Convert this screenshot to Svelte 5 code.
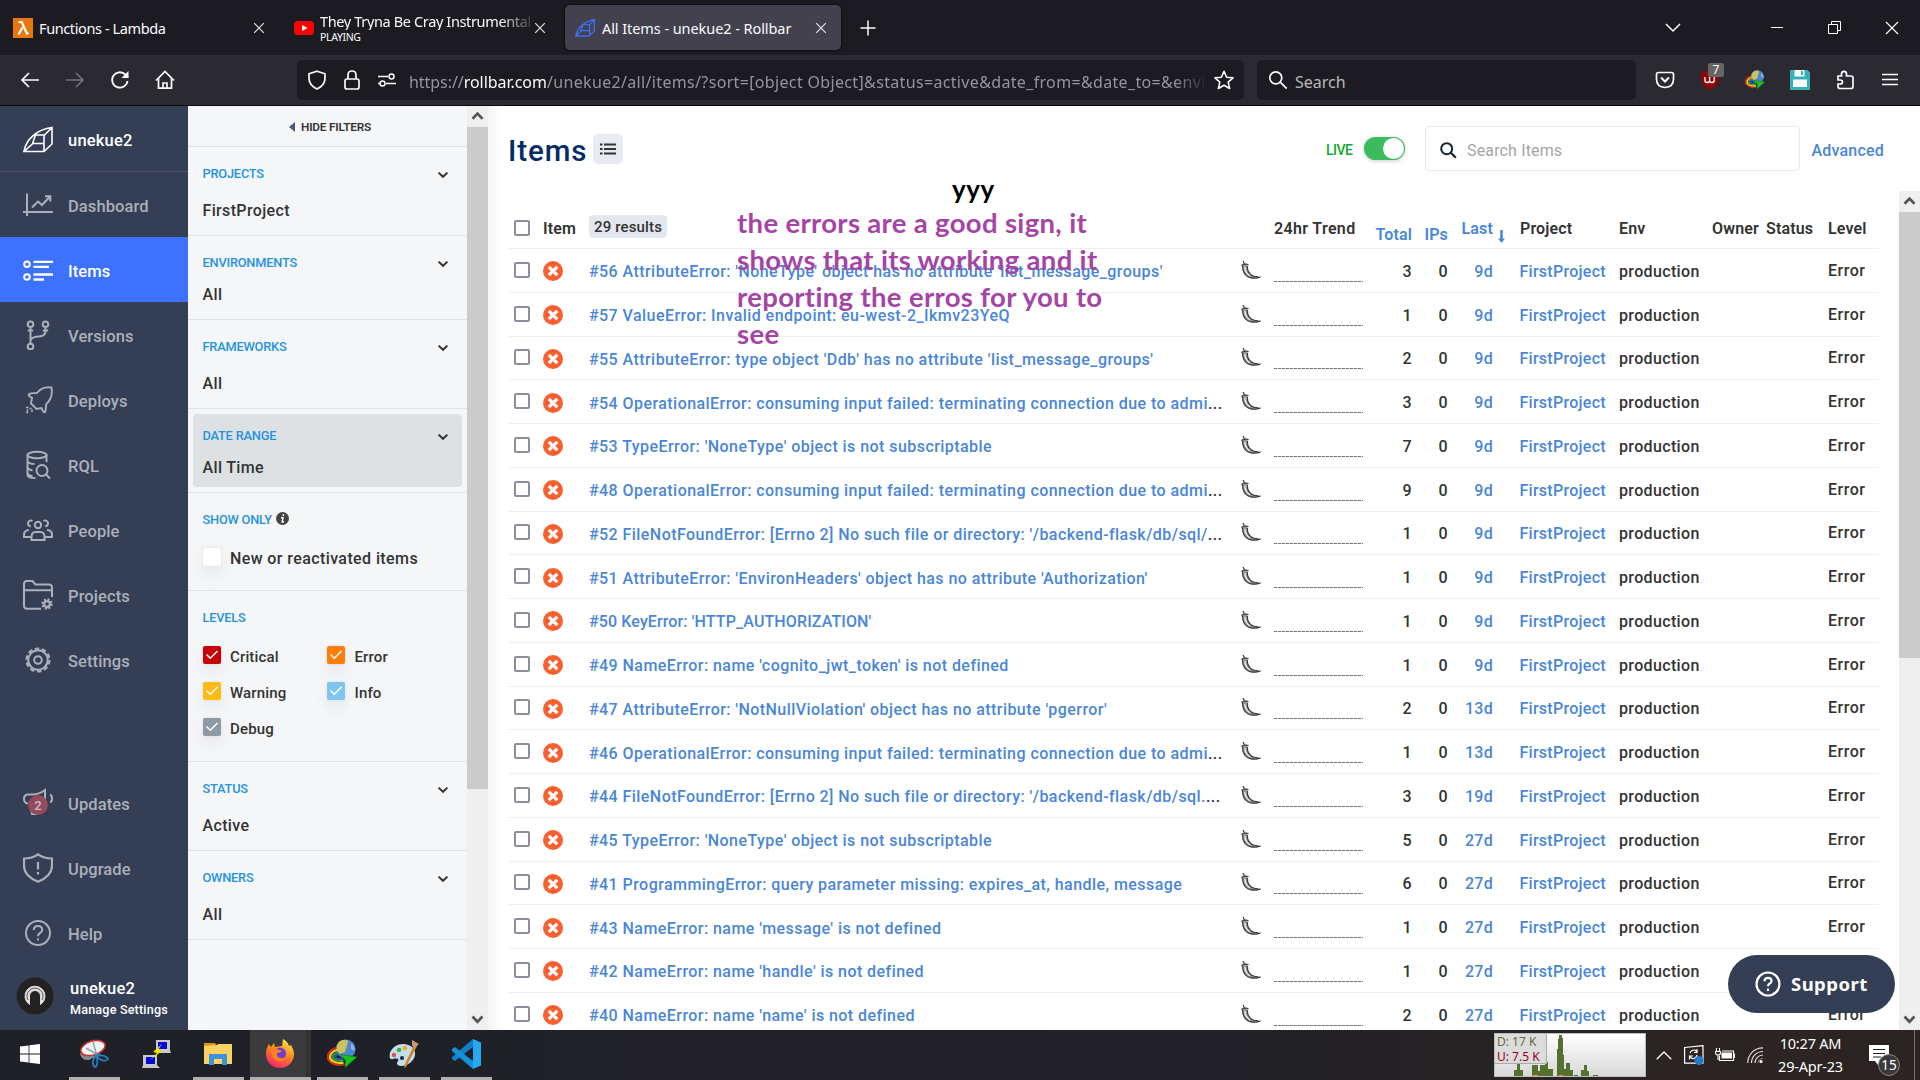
<script>
  const nav = [
    { label: 'Dashboard', icon: 'dashboard' },
    { label: 'Items', icon: 'items', active: true },
    { label: 'Versions', icon: 'versions' },
    { label: 'Deploys', icon: 'deploys' },
    { label: 'RQL', icon: 'rql' },
    { label: 'People', icon: 'people' },
    { label: 'Projects', icon: 'projects' },
    { label: 'Settings', icon: 'settings' }
  ];
  const navBottom = [
    { label: 'Updates', icon: 'updates' },
    { label: 'Upgrade', icon: 'upgrade' },
    { label: 'Help', icon: 'help' }
  ];
  const levels = [
    { label: 'Critical', cls: 'critical' },
    { label: 'Error', cls: 'error' },
    { label: 'Warning', cls: 'warning' },
    { label: 'Info', cls: 'info' },
    { label: 'Debug', cls: 'debug' }
  ];
  const rows = [
    { t: "#56 AttributeError: 'NoneType' object has no attribute 'list_message_groups'", n: 3, d: '9d' },
    { t: '#57 ValueError: Invalid endpoint: eu-west-2_Ikmv23YeQ', n: 1, d: '9d' },
    { t: "#55 AttributeError: type object 'Ddb' has no attribute 'list_message_groups'", n: 2, d: '9d' },
    { t: '#54 OperationalError: consuming input failed: terminating connection due to admi', n: 3, d: '9d', cut: true },
    { t: "#53 TypeError: 'NoneType' object is not subscriptable", n: 7, d: '9d' },
    { t: '#48 OperationalError: consuming input failed: terminating connection due to admi', n: 9, d: '9d', cut: true },
    { t: "#52 FileNotFoundError: [Errno 2] No such file or directory: '/backend-flask/db/sql/", n: 1, d: '9d', cut: true },
    { t: "#51 AttributeError: 'EnvironHeaders' object has no attribute 'Authorization'", n: 1, d: '9d' },
    { t: "#50 KeyError: 'HTTP_AUTHORIZATION'", n: 1, d: '9d', caps: true },
    { t: "#49 NameError: name 'cognito_jwt_token' is not defined", n: 1, d: '9d' },
    { t: "#47 AttributeError: 'NotNullViolation' object has no attribute 'pgerror'", n: 2, d: '13d' },
    { t: '#46 OperationalError: consuming input failed: terminating connection due to admi', n: 1, d: '13d', cut: true },
    { t: "#44 FileNotFoundError: [Errno 2] No such file or directory: '/backend-flask/db/sql.", n: 3, d: '19d', cut: true },
    { t: "#45 TypeError: 'NoneType' object is not subscriptable", n: 5, d: '27d' },
    { t: '#41 ProgrammingError: query parameter missing: expires_at, handle, message', n: 6, d: '27d' },
    { t: "#43 NameError: name 'message' is not defined", n: 1, d: '27d' },
    { t: "#42 NameError: name 'handle' is not defined", n: 1, d: '27d' },
    { t: "#40 NameError: name 'name' is not defined", n: 2, d: '27d' }
  ];
</script>

{#snippet chevron()}
  <svg class="chev" width="12" height="8" viewBox="0 0 12 8"><path d="M1.6 1.6 6 5.8l4.4-4.2" fill="none" stroke="#333" stroke-width="2" /></svg>
{/snippet}

{#snippet filter(title, value, tall)}
  <section class="filter" class:tall>
    <div class="ftitle"><span>{title}</span>{@render chevron()}</div>
    <div class="fvalue">{value}</div>
  </section>
{/snippet}

{#snippet scrollArrow(down)}
  <svg class="sarrow" width="21" height="21" viewBox="0 0 21 21"><path d={down ? 'M5.5 7.5l5 5.2 5-5.2' : 'M5.5 12.8l5-5.2 5 5.2'} fill="none" stroke="#555" stroke-width="2.7" /></svg>
{/snippet}

{#snippet closeX()}
  <svg width="12" height="12" viewBox="0 0 12 12"><path d="M1.2 1.2l9.6 9.6M10.8 1.2l-9.6 9.6" stroke="#e4e4e8" stroke-width="1.2" /></svg>
{/snippet}

{#snippet globeArrow(size)}
  <svg width={size} height={size} viewBox="0 0 30 30">
    <circle cx="19" cy="10" r="9.5" fill="#4b86cf" />
    <path d="M13 2q5-2.500 8 0l-1 5-2 6-5 2-4-4q0-6 4-9z" fill="#c9c264" />
    <path d="M24 4q4 3 4 8l-4-2z" fill="#8fb6e4" />
    <path d="M9.500 9C1 11-2 19 3.500 23q5 4.500 14 2" fill="none" stroke="#d92b1c" stroke-width="2" />
    <path d="M10 11C3 13 1 19 5.500 22q5 3 11 1.500" fill="none" stroke="#f3d21c" stroke-width="2.200" />
    <path d="M11 13.300C6 15 4 18 7.500 20.500q4 2 9 1" fill="none" stroke="#2fae35" stroke-width="1.800" />
    <path d="M12 15.200C8 16 7 18 10 19.500q3 1 6 .5" fill="none" stroke="#2c5be0" stroke-width="1.600" />
    <path d="M13.500 15.500l16.500 2.500-12 10.500.5-7z" fill="#17c51b" stroke="#0b7a10" stroke-width=".6" />
  </svg>
{/snippet}

{#snippet navIcon(name)}
  <svg class="nicon" width="30" height="30" viewBox="0 0 30 30" fill="none" stroke="currentColor" stroke-width="2">
    {#if name === 'dashboard'}
      <path d="M4 3.500V26M0 22h30M9 17.500l6-6 4 3.500 7.500-8M22 6.200h5.300v5.300" />
    {:else if name === 'items'}
      <circle cx="4" cy="9.300" r="2.800" /><circle cx="4" cy="22" r="2.800" />
      <path d="M10.500 6.800H30M10.500 11.800H26M10.500 19.500H30M10.500 24.500H21" stroke-width="2.300" />
    {:else if name === 'versions'}
      <circle cx="7.500" cy="4.300" r="2.800" /><circle cx="22.500" cy="4.300" r="2.800" /><circle cx="7.500" cy="26.500" r="2.800" />
      <path d="M7.500 8v15M4.800 10.500h5.400M19.800 10.500h5.400M22.500 8v3q0 5-6.500 5.500-8 .5-8.500 4" />
    {:else if name === 'deploys'}
      <path d="M28.500 2.500c-7-1-11 1-14.500 5.500-3 .3-6 0-7.500.8-1.500 1-1 2 1 3l1.500 1.200-1 5.500 5.500 5.500 5-1 1.500 3c1 1.500 2 1.800 2.500 0l.8-7c4.500-4 6.500-9 5.200-16.500z" stroke-width="1.900" />
      <path d="M3 22.500h2.500M6.500 23.500h2M9 24.500v2.500M3 27.500h2M4 24.500l1 2" stroke-width="1.600" />
    {:else if name === 'rql'}
      <ellipse cx="14" cy="5" rx="9.500" ry="3.200" />
      <path d="M4.500 5v20q0 3 8 3M23.500 5v7M4.500 11.500q2 2.500 7 2.500M4.500 18q2 2 5 2.500M4.500 24q2 2 5 2" />
      <circle cx="19" cy="20.500" r="5.500" /><path d="M23 24.500l4 4" />
    {:else if name === 'people'}
      <circle cx="15" cy="10" r="3.200" /><path d="M8.500 25v-3q0-5 4-5h5q4 0 4 5v3zM7.500 22H1v-2.500q0-4 5-4.500M22.500 22H29v-2.500q0-4-5-4.500M9.500 6A2.900 2.900 0 1 0 7.800 11.300M20.500 6A2.900 2.900 0 1 1 22.200 11.300" />
    {:else if name === 'projects'}
      <path d="M18 28.700H4q-3 0-3-3V4q0-3 3-3h5.500l3 3.500H26q3 0 3 3V17M1 10.300h28" />
      <circle cx="24" cy="24" r="3" stroke-width="2.400" /><circle cx="24" cy="24" r="4.800" stroke-width="1.800" stroke-dasharray="2 1.770" />
    {:else if name === 'settings'}
      <circle cx="15" cy="15" r="9.700" /><circle cx="15" cy="15" r="3.800" /><circle cx="15" cy="15" r="11.500" stroke-width="2.200" stroke-dasharray="4.500 2.725" />
    {:else if name === 'updates'}
      <path d="M9 6.500H5q-4 0-4 4.500 0 4 4 4.500M9 6.500q7 0 13-4.500v19.500l-3-1.500M27 7q2 0 2 3.500T27 14M8 20l1 6h6" />
    {:else if name === 'upgrade'}
      <path d="M15 1.300q6 4.200 14 4.200v7.500q0 10-14 15.700Q1 23 1 13V5.500q8 0 14-4.200zM15 9v7.500M15 19v2.500" stroke-width="2.200" />
    {:else if name === 'help'}
      <circle cx="15" cy="15" r="12" /><path d="M10.800 12q0-4 4.200-4t4.200 3.700q0 2.300-2.200 3.300-2 1-2 3.200M15 20.500v2" />
    {/if}
  </svg>
{/snippet}

<div class="screen">
  <div class="tabs">
    <div class="tab t1">
      <svg class="fav" width="20" height="20" viewBox="0 0 20 20"><rect width="20" height="20" fill="#e8770d" /><path d="M5.500 4h3.300l5 11.500 1.700-.5M9.500 9.500l-4 7" fill="none" stroke="#fff" stroke-width="2.200" /></svg>
      <span class="ttext">Functions - Lambda</span>
      {@render closeX()}
    </div>
    <div class="tab t2">
      <svg class="fav" width="20" height="14" viewBox="0 0 20 14"><rect width="20" height="14" rx="3.500" fill="#f00" /><path d="M8 4l5.500 3L8 10z" fill="#fff" /></svg>
      <div class="tstack"><span class="ttext fade">They Tryna Be Cray Instrumental</span><span class="playing">PLAYING</span></div>
      {@render closeX()}
    </div>
    <div class="tab t3">
      <svg class="fav" width="20" height="18" viewBox="0 0 30 27"><path d="M1 25.500C3 14 14 3 29 1v17l-8 7.500zM1 25.500l8-8h13v8M9 17.500l3-9h9.500L29 1M22 17.500V9" fill="none" stroke="#3d6ff0" stroke-width="2" /></svg>
      <span class="ttext">All Items - unekue2 - Rollbar</span>
      {@render closeX()}
    </div>
    <svg class="plus" width="16" height="16" viewBox="0 0 16 16"><path d="M8 .5v15M.5 8h15" stroke="#fbfbfe" stroke-width="1.500" /></svg>
    <div class="winctl">
      <svg width="16" height="10" viewBox="0 0 16 10"><path d="M1 1l7 7 7-7" fill="none" stroke="#fbfbfe" stroke-width="1.500" /></svg>
      <svg width="12" height="12" viewBox="0 0 12 12"><path d="M0 5.500h12" stroke="#fff" /></svg>
      <svg width="13" height="13" viewBox="0 0 13 13"><path d="M.5 3.500h9v9h-9zM3.500 3.500v-3h9v9h-3" fill="none" stroke="#fff" /></svg>
      <svg width="14" height="14" viewBox="0 0 14 14"><path d="M1 1l12 12M13 1L1 13" stroke="#fff" stroke-width="1.100" /></svg>
    </div>
  </div>

  <div class="toolbar">
    <div class="navbtns">
      <svg width="20" height="20" viewBox="0 0 20 20"><path d="M19 10H2M9 3l-7 7 7 7" fill="none" stroke="#fbfbfe" stroke-width="1.700" /></svg>
      <svg width="20" height="20" viewBox="0 0 20 20"><path d="M1 10h17M11 3l7 7-7 7" fill="none" stroke="#76757e" stroke-width="1.500" /></svg>
      <svg width="20" height="20" viewBox="0 0 20 20"><path d="M17.500 11a7.700 7.700 0 1 1-2.200-6.500L18 7" fill="none" stroke="#fbfbfe" stroke-width="1.800" /><path d="M18.500 1v7h-7z" fill="#fbfbfe" /></svg>
      <svg width="20" height="20" viewBox="0 0 20 20"><path d="M1 10.500L10 1.500l9 9M3.500 8.500v9.700h13V8.500M8 18v-5h4v5" fill="none" stroke="#fbfbfe" stroke-width="1.700" /></svg>
    </div>
    <div class="urlbar">
      <svg width="20" height="20" viewBox="0 0 20 20"><path d="M10 1.200l8 2.600v4.500q0 7-8 10.700Q2 15.300 2 8.300V3.800z" fill="none" stroke="#fbfbfe" stroke-width="1.700" /></svg>
      <svg width="16" height="20" viewBox="0 0 16 20"><rect x="1" y="9" width="14" height="10" rx="2" fill="none" stroke="#fbfbfe" stroke-width="1.700" /><path d="M4 9V5q0-4 4-4t4 4v4" fill="none" stroke="#fbfbfe" stroke-width="1.700" /></svg>
      <svg width="20" height="16" viewBox="0 0 20 16"><path d="M1 4.500h10M9 11.500h10M1 11.500h2" stroke="#fbfbfe" stroke-width="1.700" /><circle cx="14.500" cy="4.500" r="2.500" fill="none" stroke="#fbfbfe" stroke-width="1.500" /><circle cx="5.500" cy="11.500" r="2.500" fill="none" stroke="#fbfbfe" stroke-width="1.500" /></svg>
      <span class="url">https://<b>rollbar.com</b><span class="path">/unekue2/all/items/?sort=[object Object]&amp;status=active&amp;date_from=&amp;date_to=&amp;envi</span></span>
      <svg class="star" width="20" height="20" viewBox="0 0 20 20"><path d="M10 1.300l2.600 5.900 6.400.6-4.800 4.300 1.400 6.400L10 15.200l-5.600 3.300 1.400-6.400L1 7.800l6.400-.6z" fill="none" stroke="#fbfbfe" stroke-width="1.600" stroke-linejoin="round" /></svg>
    </div>
    <div class="searchbar">
      <svg width="20" height="20" viewBox="0 0 20 20"><circle cx="7.800" cy="7.800" r="6" fill="none" stroke="#fbfbfe" stroke-width="1.700" /><path d="M12.200 12.200l6.500 6.500" stroke="#fbfbfe" stroke-width="1.700" /></svg>
      <span>Search</span>
    </div>
    <div class="exts">
      <svg width="20" height="18" viewBox="0 0 20 18"><path d="M3.500 1.500h13q2 0 2 2V8q0 8-8.500 8.500Q1.500 16 1.500 8V3.500q0-2 2-2z" fill="none" stroke="#fbfbfe" stroke-width="1.700" /><path d="M6 6.500l4 4 4-4" fill="none" stroke="#fbfbfe" stroke-width="2" /></svg>
      <div class="ublock">
        <svg width="20" height="20" viewBox="0 0 20 20"><path d="M10 0l9 2.500V9q0 7-9 11Q1 16 1 9V2.500z" fill="#8c0709" /><path d="M5 7v3.500q0 2 2.300 2t2.300-2V7M9.600 10.500q0 2 2.300 2t2.300-2V7" fill="none" stroke="#fff" stroke-width="1.300" /></svg>
        <span class="badge7">7</span>
      </div>
      {@render globeArrow(20)}
      <svg width="20" height="20" viewBox="0 0 20 20"><path d="M0 0h17.500L20 2.500V20H0z" fill="#35b1b5" /><path d="M4.500 0h10v6.500h-10zM3 9.500h14V17H3z" fill="#fff" /><path d="M11 1h2v4h-2z" fill="#35b1b5" /></svg>
      <svg width="20" height="20" viewBox="0 0 20 20"><path d="M6.500 6V4q0-2.700 2.500-2.700T11.500 4v2H16q2 0 2 2v8.500q0 2-2 2H5q-2 0-2-2V14h2q2.500 0 2.500-2T5 10H3V6z" fill="none" stroke="#fbfbfe" stroke-width="1.700" /></svg>
      <svg width="16" height="14" viewBox="0 0 16 14"><path d="M0 1.500h16M0 6.500h16M0 11.500h16" stroke="#fbfbfe" stroke-width="1.500" /></svg>
    </div>
  </div>

  <div class="page">
    <nav class="side">
      <div class="brand">
        <svg width="30" height="27" viewBox="0 0 30 27"><path d="M1 25C3 14 14 3 29 1.500V18l-8 7.500H1l9-8h11v8M9.500 17.500l3-8.500h9L29 1.500M21 17.500V9" fill="none" stroke="#fff" stroke-width="1.600" /></svg>
        <span>unekue2</span>
      </div>
      {#each nav as n}
        <div class="nitem" class:active={n.active}>{@render navIcon(n.icon)}<span>{n.label}</span></div>
      {/each}
      <div class="spacer"></div>
      {#each navBottom as n}
        <div class="nitem">
          {@render navIcon(n.icon)}
          {#if n.icon === 'updates'}<i class="count">2</i>{/if}
          <span>{n.label}</span>
        </div>
      {/each}
      <div class="user">
        <svg width="38" height="38" viewBox="0 0 38 38"><circle cx="19" cy="19" r="18.500" fill="#222" /><path d="M13.500 27.500a10 10 0 1 1 11 0V19a5.500 5.500 0 0 0-11 0z" fill="#e4dedd" stroke="#e4dedd" /><path d="M15 27v-8a4 4 0 0 1 8 0v8" fill="none" stroke="#222" stroke-width="1" /><path d="M12 23a8 8 0 1 1 14 0" fill="none" stroke="#333" stroke-width=".8" /></svg>
        <div><strong>unekue2</strong><small>Manage Settings</small></div>
      </div>
    </nav>

    <aside class="filters">
      <div class="hide"><svg width="6" height="10" viewBox="0 0 6 10"><path d="M6 0v10L0 5z" fill="#4b5b80" /></svg><span>HIDE FILTERS</span></div>
      {@render filter('PROJECTS', 'FirstProject', true)}
      {@render filter('ENVIRONMENTS', 'All', false)}
      {@render filter('FRAMEWORKS', 'All', true)}
      <div class="hover">{@render filter('DATE RANGE', 'All Time', false)}</div>
      <section class="filter showonly">
        <div class="ftitle"><span>SHOW ONLY</span><svg class="infoi" width="13" height="13" viewBox="0 0 13 13"><circle cx="6.500" cy="6.500" r="6.500" fill="#444" /><path d="M7.300 2.200v1.900M5 5.800h2L6.200 10H8" fill="none" stroke="#fff" stroke-width="1.500" /></svg></div>
        <div class="check"><i class="box"></i><span class="newor">New or reactivated items</span></div>
      </section>
      <section class="filter levels">
        <div class="ftitle"><span>LEVELS</span></div>
        <div class="lgrid">
          {#each levels as l}
            <div class="check"><i class="box {l.cls}"><svg width="14" height="12" viewBox="0 0 14 12"><path d="M1.500 5.500l3.800 3.800L12.500 2" fill="none" stroke="#fff" stroke-width="1.500" /></svg></i><span>{l.label}</span></div>
          {/each}
        </div>
      </section>
      {@render filter('STATUS', 'Active', true)}
      {@render filter('OWNERS', 'All', true)}
    </aside>
    <div class="scroll left">{@render scrollArrow(false)}<div class="thumb"></div>{@render scrollArrow(true)}</div>

    <main>
      <header>
        <h1>Items</h1>
        <div class="listbtn"><svg width="16" height="12" viewBox="0 0 16 12"><path d="M0 1.500h2.500M4 1.500h12M0 6h2.500M4 6h12M0 10.500h2.500M4 10.500h12" stroke="#333" stroke-width="1.800" /></svg></div>
        <span class="live">LIVE</span>
        <div class="toggle"><i></i></div>
        <div class="sitems">
          <svg width="17" height="17" viewBox="0 0 17 17"><circle cx="6.700" cy="6.700" r="5.500" fill="none" stroke="#14272f" stroke-width="2" /><path d="M10.800 10.800l5 5" stroke="#14272f" stroke-width="2.300" /></svg>
          <span>Search Items</span>
        </div>
        <span class="adv">Advanced</span>
      </header>
      <div class="body">
        <div class="table">
          <div class="row head">
            <i class="cb"></i><span class="hitem">Item</span><span class="hres"><em>29 results</em></span><span></span>
            <span class="htrend">24hr Trend</span><span class="r blue low htot">Total</span><span class="r blue low">IPs</span><span class="r blue">Last</span>
            <svg class="darr" width="7" height="13" viewBox="0 0 7 13"><path d="M2.200 0h2.600v8.500H7L3.500 13 0 8.500h2.200z" fill="#4a86d8" /></svg>
            <span class="hproj">Project</span><span class="henv">Env</span><span class="howner">Owner</span><span class="hstat">Status</span><span class="hlev">Level</span>
          </div>
          {#each rows as r}
            <div class="row">
              <i class="cb"></i>
              <svg class="err" width="20" height="20" viewBox="0 0 20 20"><circle cx="10" cy="10" r="10" fill="#f9602f" /><path d="M5.800 5.800l8.400 8.400M14.200 5.800l-8.400 8.400" stroke="#fff" stroke-width="3.200" /></svg>
              <span class="title" class:caps={r.caps}>{r.t}{#if r.cut}<b>...</b>{/if}</span>
              <svg class="chili" width="21" height="19" viewBox="0 0 21 19"><path d="M2 0l1.500 2.700" fill="none" stroke="#333" stroke-width="1.200" /><path d="M.5 4l1.500-1.500 3-.3 3 1.300-1.500.8Q6 8.500 8.500 12q3 4 12 3.700-5 2.500-10 2Q1.500 15.500 1 6z" fill="#999" /><path d="M.5 4.500l3-1.500 4 .5M1.500 5q.3 8 5.500 10.800 4 2.300 12.500.4M6.500 5q-.5 5 2.500 7.800 2.500 2.700 8 3" fill="none" stroke="#3c3c3c" stroke-width="1.200" /><path d="M3.800 6q.2 5.500 5 8.800" fill="none" stroke="#f2f2f2" stroke-width="1.200" /></svg>
              <i class="trend"></i>
              <span class="r">{r.n}</span><span class="r">0</span><span class="r blue">{r.d}</span><span></span>
              <span class="blue proj">FirstProject</span><span class="env">production</span><span></span><span></span><span class="lvl">Error</span>
            </div>
          {/each}
        </div>
        <div class="scroll right">{@render scrollArrow(false)}<div class="thumb"></div>{@render scrollArrow(true)}</div>
      </div>
    </main>
  </div>

  <div class="note yyy">yyy</div>
  <div class="note purple">
    <div>the errors are a good sign, it</div><div>shows that its working and it</div><div>reporting the erros for you to</div><div>see</div>
  </div>
  <div class="support">
    <svg width="26" height="26" viewBox="0 0 26 26"><circle cx="13" cy="13" r="11.500" fill="none" stroke="#fff" stroke-width="2.200" /><path d="M9.500 10.200q0-3.400 3.500-3.400t3.500 3.100q0 1.900-1.800 2.700-1.700.8-1.700 2.600M13 17.500v2.400" fill="none" stroke="#fff" stroke-width="2.200" /></svg>
    <span>Support</span>
  </div>

  <div class="taskbar">
    <div class="app w1"><svg width="20" height="20" viewBox="0 0 20 20"><path d="M0 2.600l8.600-1.200v8.200H0zM9.400 1.300L20 0v9.600H9.400zM0 10.400h8.600v8.200L0 17.400zM9.400 10.400H20V20L9.400 18.700z" fill="#fff" /></svg></div>
    <div class="app on"><svg width="30" height="30" viewBox="0 0 30 30"><path d="M1 14q1 8 9 7l11-6v-4z" fill="#858a90" /><ellipse cx="14" cy="9" rx="12.500" ry="7" transform="rotate(-17 14 9)" fill="#f2f3f5" stroke="#c53030" stroke-width="1.600" /><path d="M7 9l12 7M14 3l4 14" stroke="#9ba2a8" stroke-width="1.500" /><path d="M17 16c-4 5-4 10-1 12 3-1 3-7 1-12zc4 6 10 7 12 4-1-3-7-4-12-4z" fill="none" stroke="#2080bd" stroke-width="1.800" /></svg></div>
    <div class="app"><svg width="30" height="30" viewBox="0 0 30 30"><path d="M14 1h14v10l1 3H15l-1-3zM1 16h14v10l3 3H0l1-3z" fill="#c9c9c9" /><path d="M16 3h9v7h-9zM4 18h9v7H4z" fill="#0808dd" /><path d="M20 5l-9 8 4 1-7 7 12-9-4-1z" fill="#f3e600" /></svg></div>
    <div class="app on"><svg width="28" height="24" viewBox="0 0 28 24"><path d="M0 1h11l2 3H0z" fill="#d99c0c" /><path d="M0 4l13-1 1-1h14v20H0z" fill="#fbd064" /><path d="M5 23V13q0-1 1-1h16q1 0 1 1v10h-5v-6h-8v6z" fill="#3c93d9" /></svg></div>
    <div class="app on ff"><svg width="30" height="30" viewBox="0 0 30 30"><defs><linearGradient id="ffg" x1=".8" y1="0" x2=".3" y2="1"><stop offset="0" stop-color="#fff04a" /><stop offset=".45" stop-color="#ff8a1c" /><stop offset="1" stop-color="#f5206e" /></linearGradient></defs><path d="M4 5l2 3 3-4 1 4 7-1 1-7q5 3 6 7l2-1q3 5 3 9a14 14 0 0 1-28 0Q1 9 4 5z" fill="url(#ffg)" /><circle cx="15" cy="14.500" r="6" fill="#7040cc" /><path d="M6 9q4-1 8 2l3 1q-2 2-5 2-1 4 3 5 3 1 6-1-3 5-8 4-7-1-7-13z" fill="#ff8120" /></svg></div>
    <div class="app on">{@render globeArrow(30)}</div>
    <div class="app on"><svg width="30" height="30" viewBox="0 0 30 30"><path d="M14 5c8 0 13 5 12 11s-7 11-14 11c-4 0-5-3-3-5s-2-3-5-2-4-2-3-6 6-9 13-9z" fill="#bfdff0" /><circle cx="5" cy="16" r="2.200" fill="#e0503b" /><circle cx="10" cy="11" r="2.300" fill="#4aa843" /><circle cx="16" cy="9" r="2.300" fill="#f0b020" /><circle cx="13" cy="19" r="2" fill="#202227" /><path d="M25 6l3 1-11 21-2 1 1-4z" fill="#d98324" /><path d="M23 1l7 4-4 4-3-2z" fill="#c59a6b" /></svg></div>
    <div class="app on vs"><svg width="30" height="30" viewBox="0 0 30 30"><path d="M22 0l8 3.500v23L22 30z" fill="#25a9f2" /><path d="M22 0v8L4 22l-3-2v-2z" fill="#0f7fc9" /><path d="M22 30v-8L4 8 1 10v2z" fill="#1590dd" /></svg></div>
    <div class="net">
      <svg width="150" height="42" viewBox="0 0 150 42"><path d="M19 42v-6h3v-6h3v6h3v6zM37 42V31h6v6h2v-6h5v-3h3v7h5v7zM62 42V15h1V5h1V1h3v3h1v17h1v14h2v-6h4v7h3v6zM79 42v-1h4v1zM86 42v-6h3v-5h3v6h2v5zM98 42v-1h5v1z" fill="#56702f" /><path d="M38 41.500h5M64 41.500h4" stroke="#f49a20" /></svg>
      <div class="netlab"><span>D: 17 K</span><span class="up">U: 7.5 K</span></div>
    </div>
    <div class="tray">
      <svg width="16" height="9" viewBox="0 0 16 9"><path d="M.7 8.200L8 1l7.300 7.200" fill="none" stroke="#fff" stroke-width="1.300" /></svg>
      <svg width="20" height="20" viewBox="0 0 20 20"><path d="M.6 2.500L19 .6v17.500H.6z" fill="none" stroke="#fff" stroke-width="1.200" /><path d="M6 8q1-3 5-3l2 2M13 4v3.500h-3M13 10q-1 4-5 3.500L6 12M5.500 14.500V11H9" fill="none" stroke="#fff" stroke-width="1.200" /><circle cx="15" cy="15.500" r="4.500" fill="#2878c8" /></svg>
      <svg width="20" height="14" viewBox="0 0 20 14"><path d="M6.500 4.500H17v6H6.500z" fill="#fff" /><path d="M4.500 8v4.500h14V3H7M19.500 5.500v4.500M1.500 0v3M4.500 0v3M.5 3.500h5v1.500q0 2-2.500 2T.5 5zM3 7v5" fill="none" stroke="#fff" stroke-width="1.100" /></svg>
      <svg width="16" height="16" viewBox="0 0 16 16"><path d="M.8 16A15 15 0 0 1 16 .8M4.500 16A11.500 11.500 0 0 1 16 4.500M8 16a8 8 0 0 1 8-8" fill="none" stroke="#ddd" stroke-width="1.200" /><path d="M11 16a5 5 0 0 1 5-4.500" fill="none" stroke="#888" /><circle cx="14" cy="14.500" r="1.500" fill="#fff" /></svg>
    </div>
    <div class="clock"><span>10:27 AM</span><span>29-Apr-23</span></div>
    <div class="notif">
      <svg width="20" height="20" viewBox="0 0 20 20"><path d="M0 0h20v16h-9l-2 4-3-4H0z" fill="#fff" /><path d="M4 4.500h12M4 8.500h12M4 12h8" stroke="#222" stroke-width="1.200" /></svg>
      <span>15</span>
    </div>
  </div>
</div>

<style>
  :global(body) { overflow: hidden; }
  * { box-sizing: border-box; }
  i { font-style: normal; }
  svg { display: block; flex: none; }
  .screen { position: relative; width: 1920px; height: 1080px; overflow: hidden; display: flex; flex-direction: column; font-family: Roboto, "Liberation Sans", sans-serif; background: #fff; white-space: nowrap; }

  .tabs { height: 55px; flex: none; background: #1c1b22; display: flex; align-items: center; font: 15px/18px "Noto Sans", "Open Sans", sans-serif; color: #fbfbfe; }
  .tab { display: flex; align-items: center; height: 45px; }
  .tab > :global(svg:last-child) { margin-left: auto; }
  .t1 { width: 273px; padding: 0 8px 0 13px; }
  .t2 { width: 273px; padding-left: 21px; padding-right: 0; }
  .t3 { width: 276px; margin-left: 19px; padding: 0 14px 0 10px; background: #42414d; border-radius: 5px; box-shadow: 0 0 3px #000; }
  .fav { margin-right: 6px; }
  .t3 .fav { margin-right: 7px; }
  .ttext { font-size: 14.5px; letter-spacing: -0.39px; }
  .t3 .ttext { letter-spacing: -0.07px; }
  .tstack { display: flex; flex-direction: column; width: 212px; overflow: hidden; line-height: 18px; padding-top: 0; }
  .ttext.fade { -webkit-mask-image: linear-gradient(90deg, #000 180px, transparent 216px); mask-image: linear-gradient(90deg, #000 180px, transparent 216px); letter-spacing: -0.36px; }
  .playing { font-size: 10.5px; line-height: 14px; letter-spacing: -0.35px; }
  .plus { margin-left: 19px; }
  .winctl { margin-left: auto; display: flex; align-items: center; padding-right: 21px; }
  .winctl svg:nth-child(2) { margin-left: 90px; }
  .winctl svg:nth-child(3) { margin-left: 45px; }
  .winctl svg:nth-child(4) { margin-left: 44px; }

  .toolbar { height: 51px; flex: none; background: #2b2a33; border-bottom: 1px solid #0c0b10; display: flex; align-items: center; font: 16px/22px "Noto Sans", "Open Sans", sans-serif; }
  .navbtns { display: flex; gap: 25px; padding-left: 20px; width: 297px; }
  .urlbar { width: 947px; height: 40px; border-radius: 5px; background: #1c1b22; display: flex; align-items: center; padding: 0 10px; }
  .urlbar svg:nth-child(2) { margin-left: 17px; }
  .urlbar svg:nth-child(3) { margin-left: 17px; }
  .url { margin-left: 12px; padding-top: 3px; width: 799px; color: #96959c; font-size: 16px; letter-spacing: -0.05px; -webkit-mask-image: linear-gradient(90deg, #000 765px, transparent 799px); mask-image: linear-gradient(90deg, #000 765px, transparent 799px); }
  .path { letter-spacing: .34px; }
  .url b { font-weight: 400; color: #fbfbfe; }
  .star { margin-left: auto; }
  .searchbar { margin-left: 13px; width: 379px; height: 40px; border-radius: 5px; background: #1c1b22; display: flex; align-items: center; gap: 7px; padding-left: 11px; color: #b9b9be; }
  .searchbar span { padding-top: 3px; }
  .exts { flex: 1; display: flex; align-items: center; gap: 25px; padding-left: 19px; }
  .exts > svg:last-child { margin-left: 2px; }
  .ublock { position: relative; }
  .badge7 { position: absolute; left: 8px; top: -7px; width: 16px; height: 14px; background: #666; border-radius: 2px; color: #fff; font-size: 12px; line-height: 14px; text-align: center; }

  .page { height: 924px; flex: none; display: flex; }
  .side { width: 188px; flex: none; background: #343e55; color: #abb0ba; display: flex; flex-direction: column; font-weight: 500; font-size: 16.500px; }
  .brand { height: 66px; flex: none; border-bottom: 1px solid #495269; display: flex; align-items: center; gap: 15px; padding-left: 23px; padding-top: 2px; color: #fff; letter-spacing: .2px; }
  .brand span { padding-top: 2px; }
  .nitem { position: relative; height: 65px; flex: none; display: flex; align-items: center; gap: 15px; padding-left: 23px; letter-spacing: .1px; }
  .nitem span { padding-top: 3px; }
  .nitem.active { background: #3d72ff; color: #fff; }
  .spacer { height: 78px; flex: none; }
  .count { position: absolute; left: 28px; top: 25px; width: 20px; height: 20px; border-radius: 50%; background: #964a5d; color: #c3c0ca; font-size: 13px; line-height: 21px; text-align: center; }
  .user { display: flex; gap: 16px; padding: 12px 0 0 16px; color: #fff; }
  .user div { display: flex; flex-direction: column; padding-top: 2px; }
  .user strong { font-weight: 500; font-size: 16.500px; line-height: 19px; letter-spacing: .3px; }
  .user small { font-size: 12.600px; line-height: 16px; padding-top: 4px; letter-spacing: .18px; }

  .filters { width: 279px; flex: none; background: #f5f6f8; color: #333; font-size: 16px; }
  .hide { height: 41px; border-bottom: 1px solid #dfe1e5; display: flex; align-items: center; justify-content: center; gap: 6px; font-size: 11.800px; font-weight: 600; padding-top: 2px; letter-spacing: -.22px; padding-left: 5px; }
  .filter { height: 84px; border-bottom: 1px solid #dfe1e5; padding: 18px 18px 0 14.500px; }
  .filter.tall { height: 89px; }
  .ftitle { display: flex; align-items: center; height: 16px; font-size: 12.800px; font-weight: 500; letter-spacing: -.2px; color: #2594df; }
  .chev { margin-left: auto; margin-top: 4px; }
  .fvalue { margin-top: 15px; line-height: 20px; font-weight: 480; font-size: 16px; letter-spacing: .35px; }
  .tall .fvalue { margin-top: 20px; }
  .hover { height: 84px; border-bottom: 1px solid #dfe1e5; padding: 5px 5px 0; }
  .hover .filter { height: 73px; border: 0; border-radius: 4px; background: #dee1e4; padding: 13px 13px 0 9.500px; }
  .showonly { height: 98px; }
  .infoi { margin-left: 4px; margin-top: -2px; }
  .check { display: flex; align-items: center; gap: 9.500px; font-size: 15px; font-weight: 480; height: 18px; }
  .check span { padding-top: 3px; letter-spacing: .15px; }
  .check .newor { font-size: 16px; letter-spacing: .4px; padding-top: 2px; }
  .box { width: 18px; height: 18px; border-radius: 2px; background: #fff; box-shadow: 0 0 2px #d5d8dc, 0 8px 16px rgba(0, 0, 0, .07); display: flex; align-items: center; justify-content: center; }
  .showonly .check { margin-top: 21px; }
  .levels { height: 171px; }
  .lgrid { display: grid; grid-template-columns: 124.500px 110px; row-gap: 18px; margin-top: 21px; }
  .critical { background: #c80008; } .error { background: #ff7d08; } .warning { background: #ffba13; } .info { background: #80c6ec; } .debug { background: #8e9aa5; }

  .scroll { width: 21px; flex: none; background: #efefef; display: flex; flex-direction: column; justify-content: space-between; }
  .left .thumb { height: 662px; background: #cbcbcb; margin-bottom: auto; }
  .right .thumb { height: 446px; background: #cbcbcb; margin-bottom: auto; }

  main { width: 1432px; display: flex; flex-direction: column; background: linear-gradient(90deg, #f4f4f5 0, #fff 14px); }
  header { height: 85px; flex: none; display: flex; align-items: center; padding-left: 20px; padding-top: 0; font-weight: 500; font-size: 16px; }
  h1 { margin: 0; width: 85px; font-size: 29.500px; font-weight: 500; color: #042c66; letter-spacing: .9px; padding-top: 5px; }
  .listbtn { width: 30px; height: 30px; border-radius: 5px; background: #e8ebf1; display: flex; align-items: center; justify-content: center; }
  .live { margin-left: 703px; width: 38px; font-size: 14px; color: #12a830; letter-spacing: -.5px; padding-top: 3px; }
  .toggle { width: 41px; height: 23px; border-radius: 12px; background: #3cba5e; display: flex; justify-content: flex-end; padding: 1px; box-shadow: 0 1px 4px #ccc; }
  .toggle i { width: 21px; height: 21px; border-radius: 50%; background: #fff; }
  .sitems { margin-left: 20px; width: 375px; height: 45px; border: 1px solid #e9e9ec; border-radius: 4px; display: flex; align-items: center; gap: 10.500px; padding: 4px 0 0 13.500px; color: #a5a5a5; font-weight: 450; letter-spacing: .15px; background: #fff; }
  .adv { margin-left: 11.500px; color: #4a86d8; padding-top: 3px; letter-spacing: .2px; font-weight: 500; }
  .body { height: 839px; display: flex; justify-content: space-between; padding-left: 20px; }
  .table { width: 1371px; overflow: hidden; font-size: 16px; color: #333; font-weight: 480; letter-spacing: .3px; }
  .row { height: 43.750px; border-bottom: 1px solid #eeeff1; display: grid; grid-template-columns: 35px 47px 651px 33px 90px 47px 36px 45px 28px 99px 93px 55px 61px 51px; align-items: center; padding-top: 2px; }
  .row.head { height: 58px; padding-top: 18px; font-weight: 600; font-size: 16px; letter-spacing: .15px; }
  .cb { width: 16px; height: 16px; margin-left: 6px; border: 2px solid #8f8e9d; border-radius: 2px; margin-top: -3px; background: #fff; }
  .head .cb { margin-top: -1px; }
  .hres { margin-top: -4px; }
  .hres em { display: inline-block; margin-left: -1px; height: 23px; line-height: 24px; width: 78px; text-align: center; background: #e4e8ee; border-radius: 4px; font-style: normal; font-weight: 480; font-size: 15px; }
  .r { text-align: right; margin-right: -1px; }
  .htrend { letter-spacing: .35px; }
  .hstat { margin-left: -1px; }
  .blue, .title { color: #4a86d8; }
  .title { margin-left: -1px; letter-spacing: .44px; margin-top: 1px; }
  .title.caps { letter-spacing: .12px; }
  .low { padding-top: 11px; }
  .darr { margin-left: 6px; margin-top: 15px; }
  .title b { font-weight: 480; color: #333; }
  .proj { letter-spacing: .27px; margin-left: -.5px; }
  .env { letter-spacing: .35px; }
  .lvl { margin-top: -2px; letter-spacing: .5px; }
  .chili { margin-top: -2px; }
  .trend { width: 89px; height: 1px; margin-top: 20px; background: repeating-linear-gradient(90deg, #777 0 3px, #ddd 3px 4px); }

  .note { position: absolute; font-family: Lato, "Open Sans", sans-serif; font-weight: 700; }
  .yyy { left: 952px; top: 173px; font-size: 26px; line-height: 32px; color: #000; letter-spacing: .5px; }
  .purple { left: 737px; top: 203.500px; font-size: 27.500px; line-height: 37px; color: #a445a5; letter-spacing: .33px; }
  .support { position: absolute; left: 1728px; top: 955px; width: 167px; height: 58px; border-radius: 29px; background: #343e55; color: #fff; display: flex; align-items: center; gap: 10px; padding-left: 27px; font: 700 18.500px/22px "Noto Sans", sans-serif; letter-spacing: .45px; }

  .taskbar { height: 50px; flex: none; background: linear-gradient(90deg, #1f2028, #222127 65%, #2c2422 90%); display: flex; align-items: stretch; padding-left: 4px; font-family: "Noto Sans", "Open Sans", sans-serif; color: #fff; }
  .taskbar > * { flex: none; }
  .app { width: 51px; margin-right: 11px; display: flex; align-items: center; justify-content: center; border-bottom: 3px solid transparent; }
  .w1 { margin-right: 14px; }
  .on { border-bottom-color: #b2b1ae; }
  .app.on:not(.ff) { padding-right: 1px; }
  .ff { width: 61px; margin: 0 6px 0 -5px; background: linear-gradient(90deg, #3b3b3d 56px, #29292b 56px, #343436 57px); padding-right: 2px; }
  .vs { padding-right: 2px; }
  .net { position: relative; width: 152px; margin: 3px 0 3px 991px; border: 1px solid #bbb; background: linear-gradient(#fff, #d8d8d8); }
  .netlab { position: absolute; left: 0; top: 0; width: 52px; height: 30px; background: #dcdcdc; border: solid #aaa; border-width: 0 1px 1px 0; display: flex; flex-direction: column; padding-left: 2px; font-size: 12px; line-height: 15px; color: #5c6d3c; }
  .up { color: #970018; }
  .tray { display: flex; align-items: center; margin-left: 10px; width: 107px; justify-content: space-between; }
  .clock { width: 85px; margin-left: 5px; display: flex; flex-direction: column; align-items: center; font-size: 14.500px; line-height: 23px; padding-top: 2px; letter-spacing: -.2px; }
  .notif { position: relative; margin-left: 16px; width: 46px; padding-top: 15px; border-right: 1px solid #777; }
  .notif span { position: absolute; left: 9px; top: 24px; width: 22px; height: 22px; border-radius: 50%; background: #3b3a3a; border: 1px solid #888; font-size: 13.500px; line-height: 20px; text-align: center; }
</style>
